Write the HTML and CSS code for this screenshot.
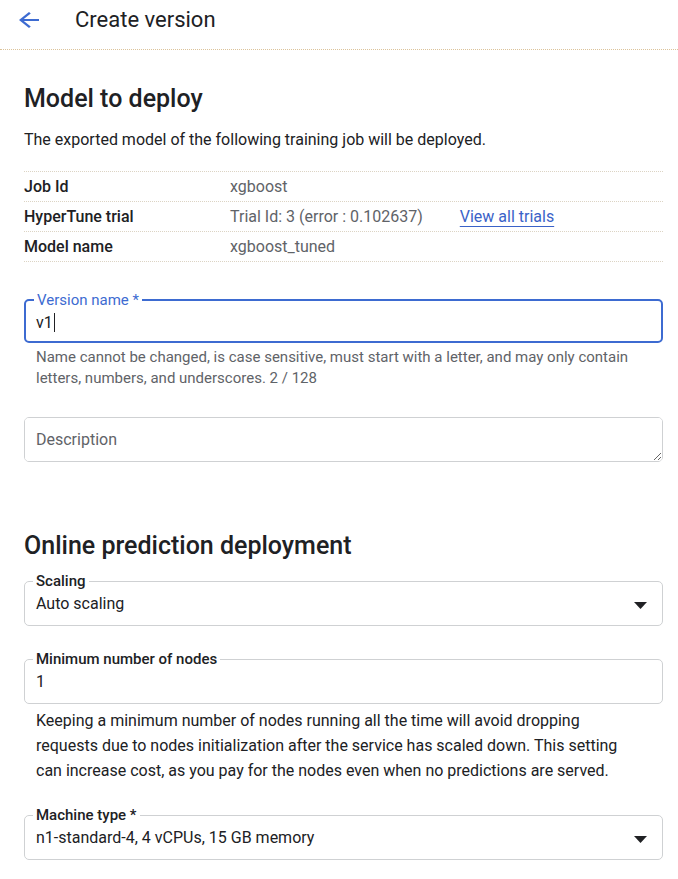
FILE: index.html
```html
<!DOCTYPE html>
<html lang="en">
<head>
<meta charset="utf-8">
<title>Create version</title>
<link rel="stylesheet" href="styles.css">
</head>
<body>
<header class="topbar">
  <svg class="back-icon" viewBox="4 4 16 16" width="20" height="16" preserveAspectRatio="none" aria-hidden="true"><path d="M20 11H7.83l5.59-5.59L12 4l-8 8 8 8 1.41-1.41L7.83 13H20v-2z"/></svg>
  <h1 class="page-title">Create version</h1>
</header>
<main class="content">
  <h2 class="section-title first">Model to deploy</h2>
  <p class="intro">The exported model of the following training job will be deployed.</p>
  <div class="info-table">
    <div class="info-row"><div class="info-label">Job Id</div><div class="info-value">xgboost</div></div>
    <div class="info-row"><div class="info-label">HyperTune trial</div><div class="info-value">Trial Id: 3 (error : 0.102637)<a class="link" href="#">View all trials</a></div></div>
    <div class="info-row"><div class="info-label">Model name</div><div class="info-value">xgboost_tuned</div></div>
  </div>

  <fieldset class="field field-focused version-field">
    <legend>Version name *</legend>
    <div class="field-value">v1<span class="caret"></span></div>
  </fieldset>
  <p class="hint">Name cannot be changed, is case sensitive, must start with a letter, and may only contain letters, numbers, and underscores. 2 / 128</p>

  <textarea class="textarea" placeholder="Description" rows="1"></textarea>

  <h2 class="section-title second">Online prediction deployment</h2>
  <fieldset class="field scaling-field">
    <legend>Scaling</legend>
    <div class="field-value select-row">
      <span>Auto scaling</span>
      <svg class="drop-icon" viewBox="0 0 13 7" width="13" height="7" aria-hidden="true"><path d="M0 0h13l-6.5 7z"/></svg>
    </div>
  </fieldset>

  <fieldset class="field nodes-field">
    <legend>Minimum number of nodes</legend>
    <div class="field-value">1</div>
  </fieldset>
  <p class="help">Keeping a minimum number of nodes running all the time will avoid dropping requests due to nodes initialization after the service has scaled down. This setting can increase cost, as you pay for the nodes even when no predictions are served.</p>

  <fieldset class="field machine-field">
    <legend>Machine type *</legend>
    <div class="field-value select-row">
      <span>n1-standard-4, 4 vCPUs, 15 GB memory</span>
      <svg class="drop-icon" viewBox="0 0 13 7" width="13" height="7" aria-hidden="true"><path d="M0 0h13l-6.5 7z"/></svg>
    </div>
  </fieldset>
</main>
</body>
</html>
```

FILE: styles.css
```css
* { box-sizing: border-box; }
html, body { margin: 0; padding: 0; background: #fff; }
body {
  font-family: Roboto, "Liberation Sans", Arial, sans-serif;
  color: #202124;
  width: 678px;
  overflow: hidden;
}
.topbar {
  display: flex;
  align-items: center;
  height: 50px;
  padding: 0 0 9px 19px;
  border-bottom: 1px dotted #dcc39a;
}
.back-icon { fill: #3d6bd1; flex: none; }
.page-title {
  margin: 0 0 0 36px;
  font-size: 22px;
  font-weight: 400;
  line-height: 28px;
  color: #202124;
}
.content { padding: 0 15px 0 24px; }
.section-title {
  margin: 0;
  font-size: 25px;
  line-height: 32px;
  font-weight: 500;
  color: #202124;
}
.section-title.first { margin-top: 33px; }
.section-title.second { margin-top: 68px; }
.intro {
  margin: 15px 0 0;
  font-size: 16px;
  line-height: 20px;
}
.info-table {
  margin-top: 21px;
  border-top: 1px dotted #dcd4c4;
}
.info-row {
  display: flex;
  align-items: center;
  height: 30px;
  border-bottom: 1px dotted #dcd4c4;
  font-size: 16px;
}
.info-label { width: 206px; font-weight: 500; color: #202124; }
.info-value { color: #5f6368; }
.link {
  margin-left: 37px;
  color: #3a62c8;
  text-decoration: underline;
  text-underline-offset: 4px;
  text-decoration-thickness: 1px;
}
.field {
  margin: 0;
  padding: 0 11px 9px;
  min-width: 0;
  border: 1px solid #cfd1d3;
  border-radius: 5px;
}
.field legend {
  margin-left: -3px;
  padding: 0 3px;
  font-size: 15px;
  line-height: 18px;
  color: #202124;
  font-weight: 500;
}
.field-focused {
  border: 2px solid #3d6bd1;
  padding: 0 10px 6px;
}
.field-focused legend {
  color: #3d6bd1;
  font-weight: 400;
  margin-left: -2px;
}
.field-value {
  padding-top: 2px;
  font-size: 16px;
  line-height: 24px;
  color: #202124;
}
.select-row {
  display: flex;
  align-items: center;
  justify-content: space-between;
  padding-right: 4px;
}
.drop-icon { fill: #202124; flex: none; margin-top: 2px; }
.caret {
  display: inline-block;
  width: 1px;
  height: 19px;
  margin-left: 1px;
  vertical-align: -4px;
  background: #202124;
}
.version-field { margin-top: 29px; }
.hint {
  margin: 4px 0 0;
  padding-left: 12px;
  font-size: 15px;
  line-height: 21px;
  color: #5f6368;
}
.textarea {
  display: block;
  width: 100%;
  height: 45px;
  margin-top: 28px;
  padding: 12px 11px;
  border: 1px solid #cfd1d3;
  border-radius: 5px;
  font-family: Roboto, "Liberation Sans", Arial, sans-serif;
  font-size: 16px;
  line-height: 20px;
  color: #202124;
  resize: vertical;
  outline: none;
}
.textarea::placeholder { color: #5f6368; opacity: 1; }
.scaling-field { margin-top: 10px; }
.nodes-field { margin-top: 24px; }
.help {
  margin: 4px 0 0;
  padding: 0 25px 0 12px;
  font-size: 16px;
  line-height: 25px;
  color: #202124;
}
.machine-field { margin-top: 23px; }
```
